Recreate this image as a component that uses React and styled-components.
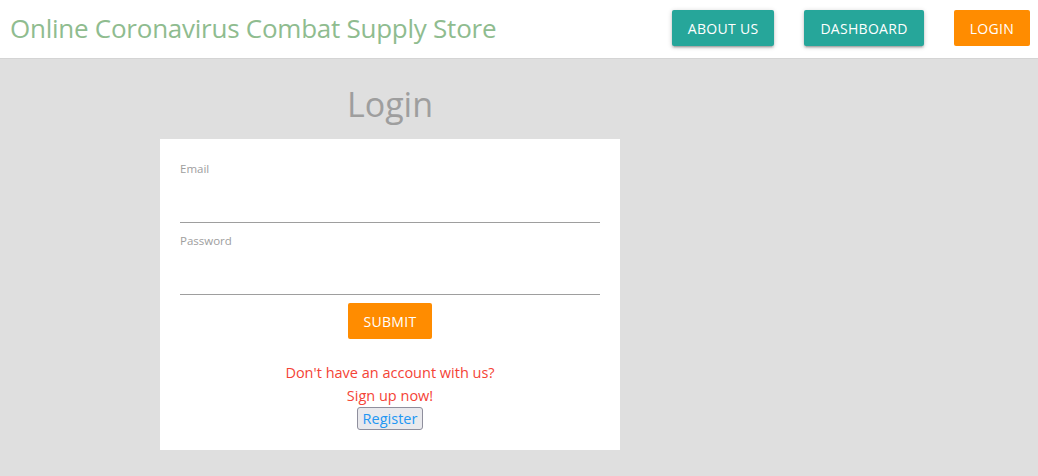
import React from "react";
import styled, { createGlobalStyle } from "styled-components";

const Global = createGlobalStyle`
  html, body { margin: 0; padding: 0; }
  body {
    background: #dfdfdf;
    font-family: "Open Sans", "Noto Sans", sans-serif;
    min-height: 476px;
  }
`;

const Header = styled.header`
  height: 58px;
  background: #fff;
  border-bottom: 1px solid #d4d4d4;
  display: flex;
  align-items: center;
  justify-content: space-between;
  padding: 0 8px 0 10px;
`;

const Brand = styled.div`
  font-size: 26px;
  color: #8fbc8f;
  letter-spacing: -0.25px;
  margin-top: -3px;
`;

const Nav = styled.nav`
  display: flex;
  gap: 30px;
  align-items: center;
  margin-top: -2px;
`;

const NavButton = styled.button`
  height: 36px;
  padding: 0 16px;
  border: none;
  border-radius: 2px;
  font-family: inherit;
  font-size: 14px;
  letter-spacing: 0.3px;
  color: #fff;
  background: ${(p) => (p.$accent ? "#ff8c00" : "#26a69a")};
  box-shadow: ${(p) =>
    p.$accent
      ? "none"
      : "0 2px 2px 0 rgba(0,0,0,0.14), 0 3px 1px -2px rgba(0,0,0,0.12), 0 1px 5px 0 rgba(0,0,0,0.2)"};
  text-transform: uppercase;
  cursor: pointer;
`;

const Main = styled.main`
  width: 460px;
  margin-left: 160px;
  display: flex;
  flex-direction: column;
  align-items: center;
`;

const Title = styled.h1`
  margin: 24px 0 14px;
  font-weight: 400;
  font-size: 34px;
  line-height: 42px;
  color: #9e9e9e;
`;

const Card = styled.form`
  align-self: stretch;
  background: #fff;
  padding: 20px 20px 20px;
  display: flex;
  flex-direction: column;
  align-items: center;
`;

const Field = styled.label`
  align-self: stretch;
  display: flex;
  flex-direction: column;
  margin-bottom: ${(p) => p.$mb || 0}px;
`;

const FieldLabel = styled.span`
  font-size: 11.5px;
  line-height: 19px;
  color: #9e9e9e;
`;

const Input = styled.input`
  height: 36px;
  margin-top: 8px;
  border: none;
  border-bottom: 1px solid #9e9e9e;
  outline: none;
  padding: 0;
  font-family: inherit;
  font-size: 15px;
  background: transparent;
`;

const Submit = styled.button`
  margin-top: 8px;
  height: 36px;
  padding: 0 16px;
  border: none;
  border-radius: 2px;
  background: #ff8c00;
  color: #fff;
  font-family: inherit;
  font-size: 14px;
  letter-spacing: 0.3px;
  cursor: pointer;
`;

const Prompt = styled.p`
  margin: 0;
  margin-top: ${(p) => p.$mt || 0}px;
  font-size: 14.5px;
  line-height: 23px;
  color: #f44336;
  text-align: center;
`;

const Register = styled.button`
  height: 23px;
  padding: 0 5px;
  font-family: inherit;
  font-size: 14.5px;
  color: #2196f3;
  background: #e9e9ed;
  border: 1px solid #8f8f9d;
  border-radius: 3px;
  cursor: pointer;
`;

export default function App() {
  return (
    <>
      <Global />
      <Header>
        <Brand>Online Coronavirus Combat Supply Store</Brand>
        <Nav>
          <NavButton>About Us</NavButton>
          <NavButton>Dashboard</NavButton>
          <NavButton $accent>Login</NavButton>
        </Nav>
      </Header>
      <Main>
        <Title>Login</Title>
        <Card onSubmit={(e) => e.preventDefault()}>
          <Field $mb={8}>
            <FieldLabel>Email</FieldLabel>
            <Input type="email" />
          </Field>
          <Field>
            <FieldLabel>Password</FieldLabel>
            <Input type="password" />
          </Field>
          <Submit type="submit">SUBMIT</Submit>
          <Prompt $mt={22}>Don't have an account with us?</Prompt>
          <Prompt>Sign up now!</Prompt>
          <Register type="button">Register</Register>
        </Card>
      </Main>
    </>
  );
}
